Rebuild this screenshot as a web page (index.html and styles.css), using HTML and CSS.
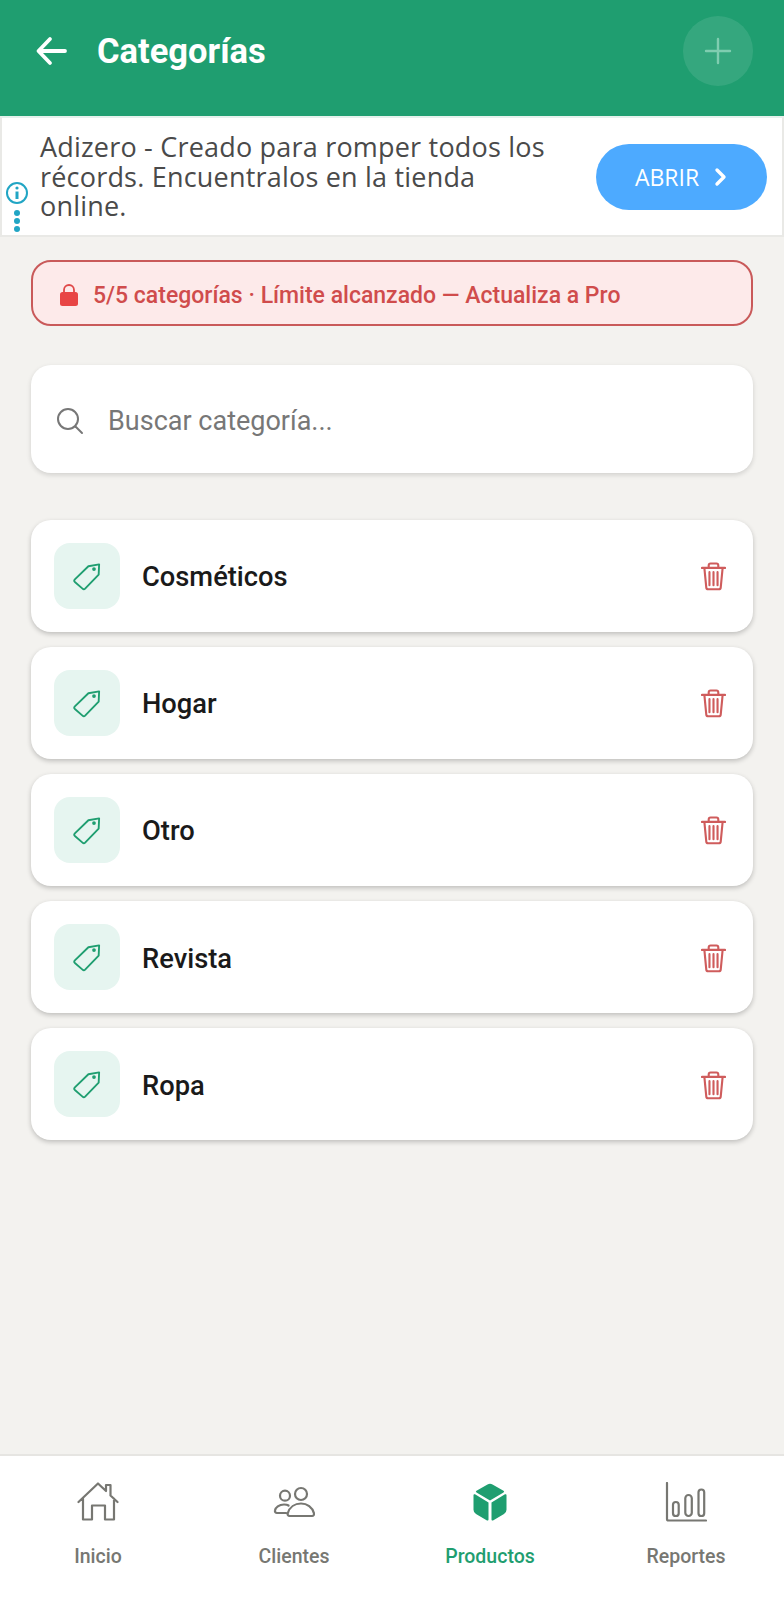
FILE: index.html
```html
<!DOCTYPE html>
<html lang="es">
  <head>
    <meta charset="UTF-8" />
    <meta name="viewport" content="width=device-width, initial-scale=1.0" />
    <title>Categorías</title>
    <link rel="stylesheet" href="styles.css">
  </head>
  <body>
    <header class="topbar">
      <svg class="back" width="33" height="32" viewBox="0 0 33 32" fill="none" stroke="#fff" stroke-width="3.800" stroke-linecap="round" stroke-linejoin="round"><path d="M30 16H4M15 4 3.500 16 15 28"/></svg>
      <h1 class="title">Categorías</h1>
      <div class="add">
        <svg width="28" height="28" viewBox="0 0 28 28" stroke="#7fcdb0" stroke-width="2.400" stroke-linecap="round"><path d="M14 2v24M2 14h24"/></svg>
      </div>
    </header>

    <section class="ad">
      <div class="ad-marks">
        <svg width="24" height="24" viewBox="0 0 24 24" fill="none"><circle cx="12" cy="12" r="10" stroke="#21a5c4" stroke-width="2"/><circle cx="12" cy="7" r="1.600" fill="#21a5c4"/><path d="M12 10.500v7.500" stroke="#21a5c4" stroke-width="3"/></svg>
        <div class="dots"><span></span><span></span><span></span></div>
      </div>
      <p class="ad-text">Adizero - Creado para romper todos los récords. Encuentralos en la tienda online.</p>
      <div class="ad-btn">
        <span>ABRIR</span>
        <svg width="14" height="20" viewBox="0 0 14 20" fill="none" stroke="#fff" stroke-width="3.400" stroke-linecap="round" stroke-linejoin="round"><path d="M3 3l7 7-7 7"/></svg>
      </div>
    </section>

    <main class="content">
      <div class="limit">
        <svg width="20" height="24" viewBox="0 0 20 24"><path d="M5 11V7a5 5 0 0 1 10 0v4" fill="none" stroke="#e04848" stroke-width="1.800"/><rect x="1" y="9" width="18" height="14" rx="2.500" fill="#e84545"/></svg>
        <span>5/5 categorías · Límite alcanzado — Actualiza a Pro</span>
      </div>

      <div class="search">
        <svg width="28" height="28" viewBox="0 0 28 28" fill="none" stroke="#777" stroke-width="2" stroke-linecap="round"><circle cx="12" cy="12" r="10"/><path d="M19.500 19.500 26 26"/></svg>
        <span>Buscar categoría...</span>
      </div>

      <ul class="list">
        <li class="card">
          <div class="tag"><svg width="28" height="28" viewBox="0 0 30 30" fill="none" stroke="#1f9e70" stroke-width="2" stroke-linejoin="round"><path d="M2 17.500 16.500 3.500 28 1.500l-.5 11L13 27.500a2 2 0 0 1-2.800 0L2 20.300a2 2 0 0 1 0-2.800z"/><circle cx="22.500" cy="6.500" r="1" fill="#1f9e70"/></svg></div>
          <span class="name">Cosméticos</span>
          <svg class="trash" width="25" height="29" viewBox="0 0 26 30" fill="none" stroke="#cf5c5c" stroke-width="2.200" stroke-linecap="round" stroke-linejoin="round"><path d="M1 6h24M8 6V3.500A2 2 0 0 1 10 1.500h6a2 2 0 0 1 2 2V6M3.500 6l2 20.500a2 2 0 0 0 2 1.800h11a2 2 0 0 0 2-1.800L22.500 6M8.800 10.500v13.500M13 10.500v13.500M17.200 10.500v13.500"/></svg>
        </li>
        <li class="card">
          <div class="tag"><svg width="28" height="28" viewBox="0 0 30 30" fill="none" stroke="#1f9e70" stroke-width="2" stroke-linejoin="round"><path d="M2 17.500 16.500 3.500 28 1.500l-.5 11L13 27.500a2 2 0 0 1-2.800 0L2 20.300a2 2 0 0 1 0-2.800z"/><circle cx="22.500" cy="6.500" r="1" fill="#1f9e70"/></svg></div>
          <span class="name">Hogar</span>
          <svg class="trash" width="25" height="29" viewBox="0 0 26 30" fill="none" stroke="#cf5c5c" stroke-width="2.200" stroke-linecap="round" stroke-linejoin="round"><path d="M1 6h24M8 6V3.500A2 2 0 0 1 10 1.500h6a2 2 0 0 1 2 2V6M3.500 6l2 20.500a2 2 0 0 0 2 1.800h11a2 2 0 0 0 2-1.800L22.500 6M8.800 10.500v13.500M13 10.500v13.500M17.200 10.500v13.500"/></svg>
        </li>
        <li class="card">
          <div class="tag"><svg width="28" height="28" viewBox="0 0 30 30" fill="none" stroke="#1f9e70" stroke-width="2" stroke-linejoin="round"><path d="M2 17.500 16.500 3.500 28 1.500l-.5 11L13 27.500a2 2 0 0 1-2.800 0L2 20.300a2 2 0 0 1 0-2.800z"/><circle cx="22.500" cy="6.500" r="1" fill="#1f9e70"/></svg></div>
          <span class="name">Otro</span>
          <svg class="trash" width="25" height="29" viewBox="0 0 26 30" fill="none" stroke="#cf5c5c" stroke-width="2.200" stroke-linecap="round" stroke-linejoin="round"><path d="M1 6h24M8 6V3.500A2 2 0 0 1 10 1.500h6a2 2 0 0 1 2 2V6M3.500 6l2 20.500a2 2 0 0 0 2 1.800h11a2 2 0 0 0 2-1.800L22.500 6M8.800 10.500v13.500M13 10.500v13.500M17.200 10.500v13.500"/></svg>
        </li>
        <li class="card">
          <div class="tag"><svg width="28" height="28" viewBox="0 0 30 30" fill="none" stroke="#1f9e70" stroke-width="2" stroke-linejoin="round"><path d="M2 17.500 16.500 3.500 28 1.500l-.5 11L13 27.500a2 2 0 0 1-2.800 0L2 20.300a2 2 0 0 1 0-2.800z"/><circle cx="22.500" cy="6.500" r="1" fill="#1f9e70"/></svg></div>
          <span class="name">Revista</span>
          <svg class="trash" width="25" height="29" viewBox="0 0 26 30" fill="none" stroke="#cf5c5c" stroke-width="2.200" stroke-linecap="round" stroke-linejoin="round"><path d="M1 6h24M8 6V3.500A2 2 0 0 1 10 1.500h6a2 2 0 0 1 2 2V6M3.500 6l2 20.500a2 2 0 0 0 2 1.800h11a2 2 0 0 0 2-1.800L22.500 6M8.800 10.500v13.500M13 10.500v13.500M17.200 10.500v13.500"/></svg>
        </li>
        <li class="card">
          <div class="tag"><svg width="28" height="28" viewBox="0 0 30 30" fill="none" stroke="#1f9e70" stroke-width="2" stroke-linejoin="round"><path d="M2 17.500 16.500 3.500 28 1.500l-.5 11L13 27.500a2 2 0 0 1-2.800 0L2 20.300a2 2 0 0 1 0-2.800z"/><circle cx="22.500" cy="6.500" r="1" fill="#1f9e70"/></svg></div>
          <span class="name">Ropa</span>
          <svg class="trash" width="25" height="29" viewBox="0 0 26 30" fill="none" stroke="#cf5c5c" stroke-width="2.200" stroke-linecap="round" stroke-linejoin="round"><path d="M1 6h24M8 6V3.500A2 2 0 0 1 10 1.500h6a2 2 0 0 1 2 2V6M3.500 6l2 20.500a2 2 0 0 0 2 1.800h11a2 2 0 0 0 2-1.800L22.500 6M8.800 10.500v13.500M13 10.500v13.500M17.200 10.500v13.500"/></svg>
        </li>
      </ul>
    </main>

    <nav class="tabs">
      <div class="tab">
        <svg width="42" height="40" viewBox="0 0 42 40" fill="none" stroke="#777772" stroke-width="2.200" stroke-linecap="round" stroke-linejoin="round"><path d="M1.500 20 21 1.500l8 7.500V3h4.500v10.500L40.500 20M6 16.500V37.500h9V23.500h13v14h9V16.500"/></svg>
        <span>Inicio</span>
      </div>
      <div class="tab">
        <svg width="42" height="40" viewBox="0 0 42 40" fill="none" stroke="#777772" stroke-width="2.200" stroke-linecap="round" stroke-linejoin="round"><circle cx="12" cy="13.700" r="5"/><circle cx="28" cy="12" r="6"/><path d="M13 31H4a2 2 0 0 1-2-2.500c.5-3 4-6 9-6 2 0 3.500.3 4.500 1M16.500 34a2 2 0 0 1-1.800-2.600C16.500 25 22 21.500 28 21.500s11.500 3.500 13 9.900a2 2 0 0 1-1.900 2.600z"/></svg>
        <span>Clientes</span>
      </div>
      <div class="tab tab-on">
        <svg width="42" height="40" viewBox="0 0 42 40" fill="#1f9e70"><path d="M18.500 2.500a5 5 0 0 1 5 0l11 6.200a1 1 0 0 1 0 1.700L21 18.500 7.500 10.400a1 1 0 0 1 0-1.700z"/><path d="M4.500 13.200a1 1 0 0 1 1.500-.9L19.500 20.500v17a1 1 0 0 1-1.500.9L7 32a5 5 0 0 1-2.500-4.300z"/><path d="M37.500 13.200a1 1 0 0 0-1.500-.9L22.500 20.500v17a1 1 0 0 0 1.500.9L35 32a5 5 0 0 0 2.500-4.300z"/></svg>
        <span>Productos</span>
      </div>
      <div class="tab">
        <svg width="42" height="40" viewBox="0 0 42 40" fill="none" stroke="#777772" stroke-width="2.200" stroke-linecap="round" stroke-linejoin="round"><path d="M2 1v36a1.500 1.500 0 0 0 1.500 1.500H41"/><rect x="8" y="20" width="5.700" height="14" rx="2.800"/><rect x="20.300" y="13" width="6.500" height="21" rx="3.200"/><rect x="33.500" y="7.500" width="5.700" height="26.500" rx="2.800"/></svg>
        <span>Reportes</span>
      </div>
    </nav>
  </body>
</html>
```

FILE: styles.css
```css
* {
  box-sizing: border-box;
}
body {
  margin: 0;
  width: 784px;
  height: 1600px;
  display: flex;
  flex-direction: column;
  background: #f3f2ef;
  font-family: Roboto, sans-serif;
}
.topbar {
  height: 116px;
  flex: none;
  display: flex;
  align-items: center;
  padding: 0 31px 15px 35px;
  background: #1f9e70;
}
.title {
  margin: 0 0 0 29px;
  flex: 1;
  color: #fff;
  font-size: 34.500px;
  font-weight: 700;
}
.add {
  width: 70px;
  height: 70px;
  border-radius: 50%;
  display: flex;
  align-items: center;
  justify-content: center;
  background: rgba(255, 255, 255, 0.1);
}
.ad {
  height: 121px;
  flex: none;
  display: flex;
  align-items: center;
  padding: 0 15px 0 3px;
  background: #fff;
  border: 2px solid #e9e9e6;
  border-top-color: #e4f1ec;
}
.ad-marks {
  width: 24px;
  align-self: flex-end;
  margin-bottom: 3px;
  display: flex;
  flex-direction: column;
  align-items: center;
  gap: 5px;
}
.dots {
  display: flex;
  flex-direction: column;
  gap: 2px;
}
.dots span {
  width: 6px;
  height: 6px;
  border-radius: 50%;
  background: #21a5c4;
}
.ad-text {
  margin: 0 0 0 11px;
  flex: 1;
  color: #4a4a4a;
  font-family: "Open Sans", sans-serif;
  font-size: 27px;
  line-height: 29.500px;
  letter-spacing: 0.2px;
  padding-right: 30px;
}
.ad-btn {
  width: 171px;
  height: 66px;
  flex: none;
  border-radius: 33px;
  display: flex;
  align-items: center;
  justify-content: center;
  gap: 15px;
  background: #4daaff;
  color: #fff;
  font-family: "Open Sans", sans-serif;
  font-size: 23px;
}
.content {
  flex: 1;
  padding: 23px 31px 0;
}
.limit {
  height: 66px;
  display: flex;
  align-items: center;
  gap: 14px;
  padding: 4px 0 0 26px;
  border: 2px solid #c95a5a;
  border-radius: 20px;
  background: #fdeaea;
  color: #d04c4c;
  font-size: 23px;
  font-weight: 500;
}
.search {
  height: 108px;
  margin-top: 39px;
  display: flex;
  align-items: center;
  gap: 24px;
  padding: 3px 0 0 25px;
  border-radius: 20px;
  background: #fff;
  box-shadow: 0 2px 5px rgba(0, 0, 0, 0.14);
  color: #777;
  font-size: 27px;
}
.list {
  list-style: none;
  margin: 46.500px 0 0;
  padding: 0;
  display: flex;
  flex-direction: column;
  gap: 15.200px;
}
.card {
  height: 112px;
  display: flex;
  align-items: center;
  padding: 0 27px 0 23px;
  border-radius: 20px;
  background: #fff;
  box-shadow: 0 2px 5px rgba(0, 0, 0, 0.22);
}
.tag {
  width: 66px;
  height: 66px;
  flex: none;
  display: flex;
  align-items: center;
  justify-content: center;
  border-radius: 16px;
  background: #e6f5f0;
}
.tag svg {
  margin-top: 2px;
}
.trash {
  margin-top: 2px;
}
.name {
  flex: 1;
  margin-left: 22px;
  padding-top: 3px;
  color: #1a1a1a;
  font-size: 27.300px;
  font-weight: 500;
}
.tabs {
  height: 146px;
  flex: none;
  display: grid;
  grid-template-columns: repeat(4, 1fr);
  padding-top: 26px;
  border-top: 2px solid #e6e5e2;
  background: #fff;
}
.tab {
  display: flex;
  flex-direction: column;
  align-items: center;
  gap: 23px;
  color: #777772;
  font-size: 19.500px;
  font-weight: 500;
}
.tab-on {
  color: #1f9e70;
}
```
